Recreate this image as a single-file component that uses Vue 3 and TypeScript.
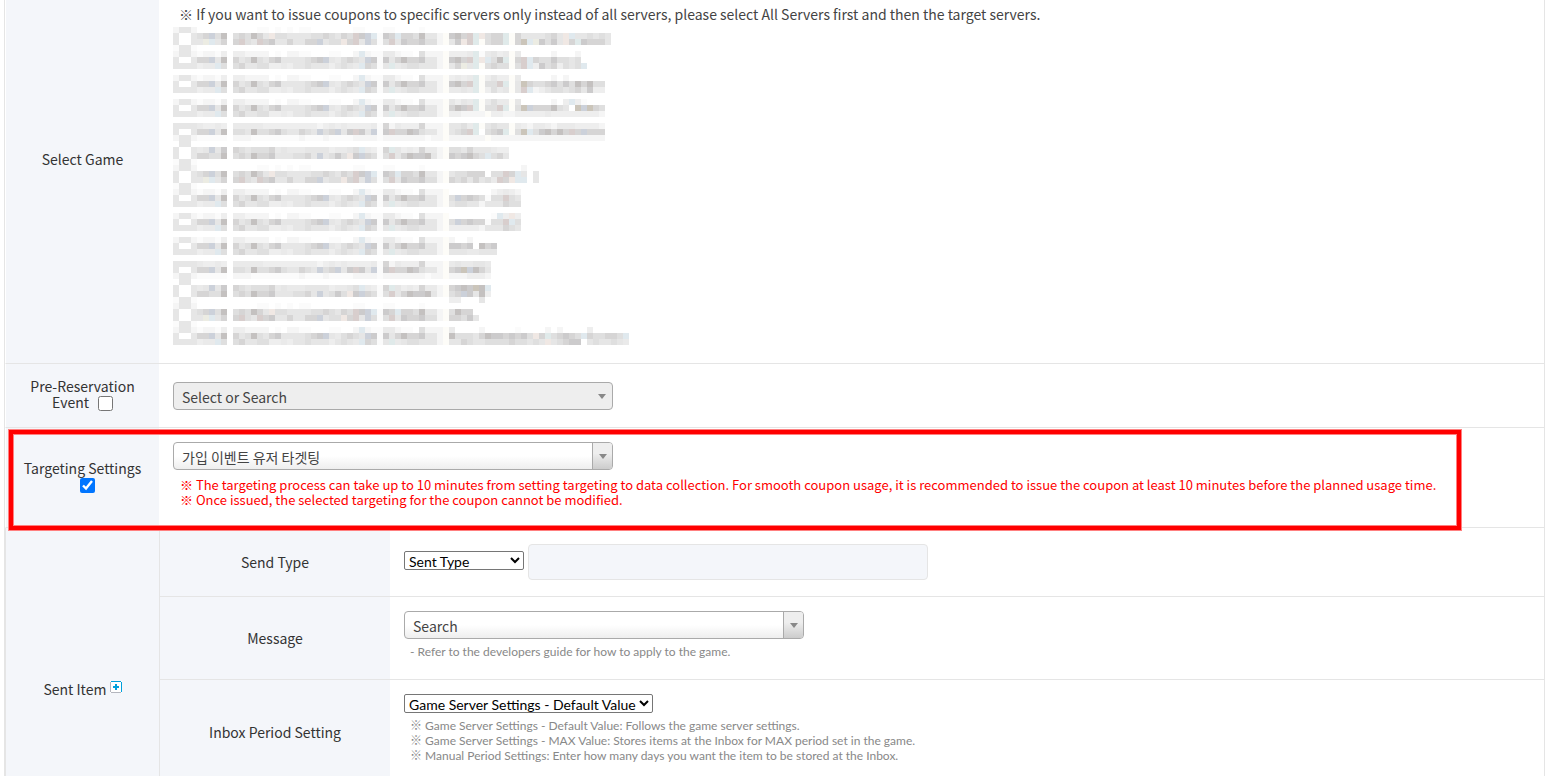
<script setup lang="ts">
import { ref } from 'vue'

const preReservation = ref(false)
const targeting = ref(true)

/* Masked server list: every character is the tone of one 6px block. */
const CELL = 6
const tones: Record<string, string> = {
  '1': '#fbfbfb', '2': '#f5f5f5', '3': '#eeeeee', '4': '#eaeaea', '5': '#e6e6e6',
  '6': '#dfdfdf', '7': '#d6d5d5', '8': '#cccbcc', '9': '#c4c1c0',
  b: '#ccd1da', p: '#e0e9ee', r: '#d8cecd', t: '#cbc5ba', w: '#f0e8e4', y: '#ecece3', c: '#e0eaea', i: '#fdfcf8',
}

type Part = [box: string, id: string, path: string, kind: string]
const phases: Record<string, Part[]> = {
  A: [
    ['2552', '00000', '000011010101100000001100', '110000100'],
    ['5005', '67b69', '676975w6655556676576r8bp', '87p776955'],
    ['5005', '5yp57', '7r65r785575577b566w7r5b6', '6r5877866'],
    ['1551', '00000', '000000000000000000000000', '000000000'],
  ],
  B: [
    ['2552', '12213', '332222010221100011002p21', '442110622'],
    ['5005', '77b59', '756965785555678b546765b8', '857977855'],
    ['5555', '344p6', '675566334355655535654p76', '5c4566555'],
  ],
  C: [
    ['5555', '43343', '444443333333332343433334', '724333722'],
    ['5005', '77b59', '66596678655765b67b58r85b', '8r7798655'],
    ['2552', '11111', '222111111112111211112222', '222222212'],
    ['0550', '00000', '000000000000000000000000', '000000000'],
  ],
  D: [
    ['5005', '45b58', '765666745444555534456p43', '7c5343744'],
    ['5005', '77669', '67697785556675b5686w8b76', '6r5798895'],
    ['1551', '00000', '000000000000000000000000', '000000000'],
  ],
}

interface Line { at: number; phase: string; tail: string[] }
const lines: Line[] = [
  { at: 0, phase: 'A', tail: ['', '897rcw677ci75555675wp556565', '58wrci677ci7tpy8685w7c87775'] },
  { at: 4, phase: 'B', tail: ['3334c14534i40000020002', '897rcwp69ci7rp76686656', '57y5ci6766i6rp38673656p'] },
  { at: 8, phase: 'B', tail: ['3434ci3533i4000002020', '897rci66rci5t7667868697966', '4454ci3645i5rp235665675833'] },
  { at: 12, phase: 'B', tail: ['5354ci4644i500000203p31', '798rci66rci6tb7779650tbt76', '332222i3322333334333333332'] },
  { at: 16, phase: 'C', tail: ['5564ci5655i432443244433332', '567rc0678ci6tp689797r7b777', '222222i2222222222222222222'] },
  { at: 20, phase: 'D', tail: ['6657555433', '878976p675'] },
  { at: 23, phase: 'A', tail: ['00000000000020', '566777066r7p505', '76757564r7wpp05'] },
  { at: 27, phase: 'B', tail: ['000000023432', '6b7876166r65', '566552555766'] },
  { at: 31, phase: 'B', tail: ['00000001p3w3', '6b7877166rp6', '333332555765'] },
  { at: 35, phase: 'B', tail: ['20020000', '88780978', '55544555'] },
  { at: 39, phase: 'C', tail: ['4544554', '78tb975', '2223332'] },
  { at: 43, phase: 'D', tail: ['7898t9p', '67b8593', '3300050'] },
  { at: 46, phase: 'A', tail: ['', '6977', '77685'] },
  { at: 50, phase: 'B', tail: ['400002000001000020200003', '96665798878786w7c67876p766776p', '5576556666766565w5678805655654'] },
]

interface Block { x: number; y: number; fill: string }
const blocks: Block[] = []
for (const line of lines) {
  phases[line.phase].forEach(([box, id, path, kind], row) => {
    const tail = line.tail[row] ?? ''
    const joint = id === '00000' ? '0' : '1'
    const text = box + id + '0' + path + joint + kind + (joint === '1' ? '2i' : '00') + tail
    Array.from(text).forEach((tone, col) => {
      if (tones[tone]) blocks.push({ x: col * CELL, y: (line.at + row) * CELL, fill: tones[tone] })
    })
  })
}
</script>

<template>
  <main class="page">
    <table class="form">
      <colgroup>
        <col class="col-main" />
        <col class="col-sub" />
        <col />
      </colgroup>
      <tbody>
        <tr>
          <th scope="row" class="game-head">Select Game</th>
          <td colspan="2" class="game-cell">
            <p class="lead">※ If you want to issue coupons to specific servers only instead of all servers, please select All Servers first and then the target servers.</p>
            <svg class="masked" width="468" height="318" viewBox="0 0 468 318" shape-rendering="crispEdges" aria-hidden="true">
              <rect v-for="(b, i) in blocks" :key="i" :x="b.x" :y="b.y" width="6" height="6" :fill="b.fill" />
            </svg>
          </td>
        </tr>
        <tr>
          <th scope="row">
            <label for="pre">Pre-Reservation<br />Event</label>
            <input id="pre" v-model="preReservation" class="tick beside" type="checkbox" />
          </th>
          <td colspan="2" class="event-cell">
            <div class="combo wide off">
              <select aria-label="Pre-Reservation Event" disabled><option>Select or Search</option></select>
            </div>
          </td>
        </tr>
        <tr class="target-row">
          <th scope="row">
            <label for="target" class="block">Targeting Settings</label>
            <input id="target" v-model="targeting" class="tick under" type="checkbox" />
          </th>
          <td colspan="2" class="target-cell">
            <div class="combo wide">
              <select aria-label="Targeting Settings"><option>가입 이벤트 유저 타겟팅</option></select>
            </div>
            <p class="warn">
              ※ The targeting process can take up to 10 minutes from setting targeting to data collection. For smooth coupon usage, it is recommended to issue the coupon at least 10 minutes before the planned usage time.<br />
              ※ Once issued, the selected targeting for the coupon cannot be modified.
            </p>
            <span class="highlight"></span>
          </td>
        </tr>
        <tr>
          <th scope="rowgroup" rowspan="4" class="item-head">
            Sent Item
            <button type="button" class="add" aria-label="Add item">
              <svg width="12" height="12" viewBox="0 0 12 12" shape-rendering="crispEdges">
                <rect x="0" y="0" width="12" height="12" fill="#fff" />
                <path d="M0 1h1v10H0zM1 11h10v1H1z" fill="#b4b6be" />
                <path d="M1 0h10v1H1zM11 1h1v10h-1z" fill="#00a0dc" />
                <path d="M5 3h2v2h2v2H7v2H5V7H3V5h2z" fill="#00a0dc" />
              </svg>
            </button>
          </th>
          <th scope="row" class="sub"><label for="send">Send Type</label></th>
          <td class="send-cell">
            <div class="send">
              <select id="send" class="plain short"><option>Sent Type</option></select>
              <input class="readonly" type="text" aria-label="Send value" readonly />
            </div>
          </td>
        </tr>
        <tr>
          <th scope="row" class="sub"><label for="message">Message</label></th>
          <td class="message-cell">
            <div class="combo">
              <select id="message"><option>Search</option></select>
            </div>
            <p class="note">- Refer to the developers guide for how to apply to the game.</p>
          </td>
        </tr>
        <tr>
          <th scope="row" class="sub"><label for="period">Inbox Period Setting</label></th>
          <td class="period-cell">
            <select id="period" class="plain long"><option>Game Server Settings - Default Value</option></select>
            <p class="note">
              ※ Game Server Settings - Default Value: Follows the game server settings.<br />
              ※ Game Server Settings - MAX Value: Stores items at the Inbox for MAX period set in the game.<br />
              ※ Manual Period Settings: Enter how many days you want the item to be stored at the Inbox.
            </p>
          </td>
        </tr>
        <tr class="rest">
          <th class="sub"></th>
          <td></td>
        </tr>
      </tbody>
    </table>
  </main>
</template>

<style>
body {
  background: #fff;
}
</style>

<style scoped>
.page {
  height: 100vh;
  overflow: hidden;
  padding-left: 4px;
  box-sizing: border-box;
  font-family: "Noto Sans CJK KR", "Noto Sans", sans-serif;
  font-size: 14px;
  line-height: 16px;
  color: #444;
}
.page *,
.page *::before,
.page *::after {
  box-sizing: border-box;
}
.form {
  width: 100%;
  table-layout: fixed;
  border-spacing: 0;
  border-left: 1px solid #e5e5e5;
  border-right: 1px solid #e5e5e5;
}
.col-main {
  width: 154px;
}
.col-sub {
  width: 231px;
}
th,
td {
  padding: 0;
  border-bottom: 1px solid #e5e5e5;
}
th {
  padding-bottom: 2px;
  background: #f4f6fa;
  border-left: 1px solid #fff;
  font-weight: 400;
  color: #333;
  text-align: center;
  vertical-align: middle;
}
td {
  padding-left: 14px;
  vertical-align: top;
}
p {
  margin: 0;
}
.game-head {
  padding-bottom: 45px;
}
.game-cell {
  padding-top: 2px;
  padding-bottom: 18px;
}
.lead {
  margin-bottom: 1px;
  padding-left: 6px;
  line-height: 24px;
  white-space: nowrap;
}
.masked {
  display: block;
}
.event-cell {
  padding-top: 18px;
  padding-bottom: 17px;
}
.target-cell {
  padding-top: 14px;
  padding-bottom: 20px;
}
.target-row {
  position: relative;
}
.highlight {
  position: absolute;
  top: 2px;
  bottom: -2px;
  left: 4px;
  right: 83px;
  border: 4px solid #f00;
  box-shadow: 0 0 0 1px #ff8080, inset 0 0 0 1px #ff8080;
  pointer-events: none;
}
.warn {
  margin-top: 7px;
  padding-left: 7px;
  font-size: 13px;
  line-height: 15px;
  color: #f00;
  white-space: nowrap;
}
.block {
  display: block;
}
.tick {
  width: 15px;
  height: 15px;
  margin: 2px 0 0;
  vertical-align: top;
}
.beside {
  margin-left: 9px;
}
.under {
  margin-left: 10px;
}
.item-head,
.sub {
  border-left-color: #e5e5e5;
}
.sub {
  padding-bottom: 0;
}
.add {
  width: 12px;
  height: 12px;
  padding: 0;
  border: 0;
  background: none;
  vertical-align: 2px;
}
.add svg {
  display: block;
}
.send-cell {
  padding-top: 16px;
  padding-bottom: 16px;
}
.send {
  display: flex;
  align-items: flex-start;
  gap: 4px;
}
.readonly {
  width: 400px;
  height: 36px;
  border: 1px solid #e5e5e5;
  border-radius: 4px;
  background: #f4f6fa;
  outline: none;
}
.plain {
  display: block;
  height: 19px;
  padding: 0;
  border: 1px solid #767676;
  border-radius: 2px;
  background: #fff;
  color: #000;
  font-family: Lato, "Noto Sans CJK KR", sans-serif;
  font-size: 14px;
}
.short {
  width: 120px;
  margin-top: 7px;
}
.long {
  width: 249px;
}
.message-cell {
  padding-top: 14px;
  padding-bottom: 20px;
}
.period-cell {
  padding-top: 14px;
  padding-bottom: 21px;
}
.note {
  margin-top: 5px;
  padding-left: 6px;
  font-family: Lato, "Noto Sans CJK KR", sans-serif;
  font-size: 12px;
  line-height: 15px;
  color: #888;
}
.combo {
  position: relative;
  width: 400px;
  height: 28px;
  border: 1px solid #aaa;
  border-radius: 4px;
  background: linear-gradient(to top, #eee 0%, #fff 50%);
  overflow: hidden;
}
.wide {
  width: 440px;
}
.combo select {
  appearance: none;
  display: block;
  width: 100%;
  height: 26px;
  padding: 2px 28px 0 8px;
  border: 0;
  background: none;
  color: #444;
  font-family: inherit;
  font-size: 14px;
  opacity: 1;
}
.combo::before {
  content: "";
  position: absolute;
  top: 0;
  right: 0;
  width: 20px;
  height: 100%;
  border-left: 1px solid #aaa;
  background: linear-gradient(to top, #ccc 0%, #eee 60%);
  pointer-events: none;
}
.combo::after {
  content: "";
  position: absolute;
  top: 11px;
  right: 5px;
  border: 4px solid transparent;
  border-top: 5px solid #888;
  border-bottom: 0;
  pointer-events: none;
}
.off {
  background: #eee;
}
.off::before {
  border-left: 0;
  background: none;
}
.off::after {
  right: 6px;
}
.rest {
  height: 67px;
}
</style>
